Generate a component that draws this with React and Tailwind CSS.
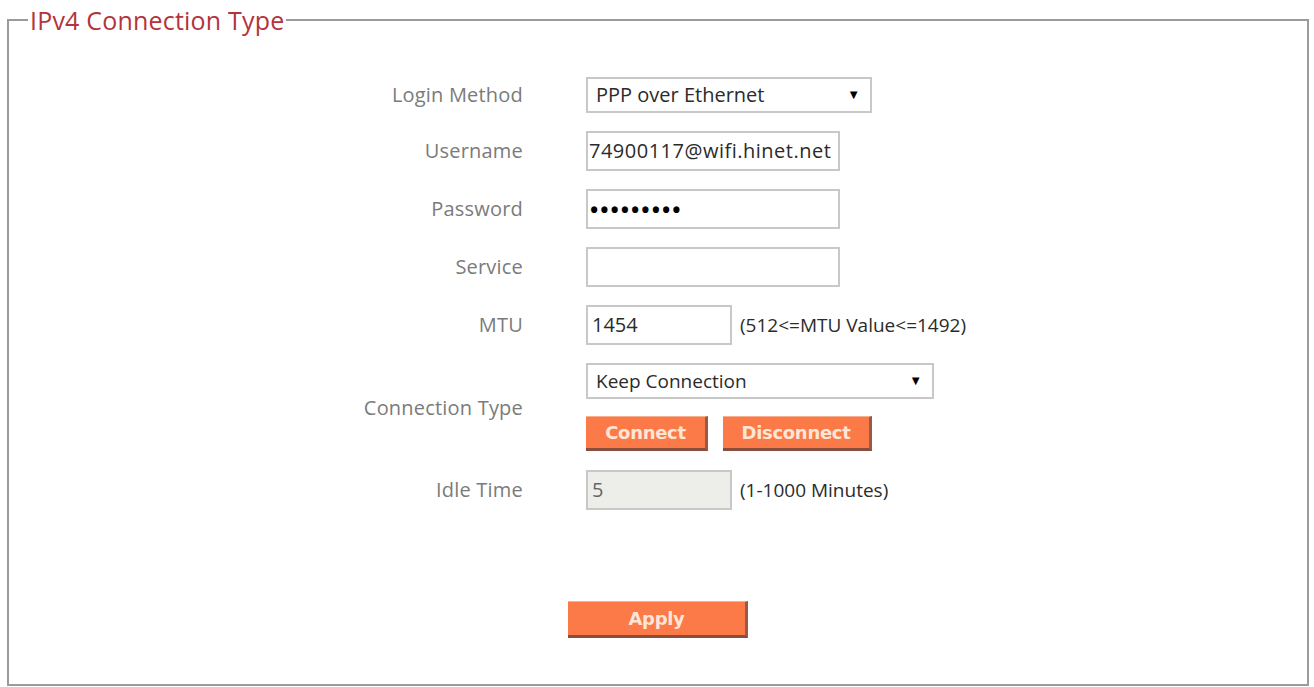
import React from "react";

const font = { fontFamily: '"Open Sans", "Noto Sans", Arial, sans-serif' };

function Label({ children }) {
  return (
    <div className="flex items-center justify-end text-[20px] text-[#7b7b7b] tracking-[0.2px]">
      {children}
    </div>
  );
}

function Box({ w, children, bg = "bg-white", h = "h-[40px]" }) {
  return (
    <div
      className={`${w} ${h} ${bg} border-2 border-[#c8c8c8] flex items-center pl-[1px] text-[20px] text-[#2b2b2b] overflow-hidden whitespace-nowrap`}
    >
      {children}
    </div>
  );
}

function Select({ w, children, size = "text-[20px]" }) {
  return (
    <div
      className={`${w} h-[36px] bg-white border-2 border-[#c8c8c8] flex items-center justify-between pl-[8px] pr-[10px] ${size} text-[#2b2b2b]`}
    >
      <span>{children}</span>
      <span className="text-[13px] text-black">▼</span>
    </div>
  );
}

function Btn({ w, h = "h-[35px]", children }) {
  return (
    <div
      className={`${w} ${h} bg-[#fb7a47] border-t border-t-[#f6b08f] border-b-[3px] border-b-[#8a4d3c] border-r-[3px] border-r-[#9a5a46] flex items-center justify-center text-[18px] font-bold text-[#fde6d8] tracking-[-0.3px]`}
      style={{ fontFamily: '"DejaVu Sans", Verdana, sans-serif' }}
    >
      {children}
    </div>
  );
}

export default function App() {
  return (
    <div className="w-[1314px] h-[687px] bg-white pt-[5px] pl-[7px] pr-[5px]" style={font}>
      <fieldset className="h-[681px] border-2 border-[#9b9b9b]">
        <legend className="ml-[19px] px-[2px] text-[25px] leading-[30px] text-[#b5333a] tracking-[0.2px]">
          IPv4 Connection Type
        </legend>
        <div className="pt-[42px]">
          <div className="grid grid-cols-[514px_auto] gap-x-[63px] gap-y-[18px] items-start">
            <Label><span className="leading-[36px]">Login Method</span></Label>
            <Select w="w-[286px]">PPP over Ethernet</Select>

            <Label><span className="leading-[40px]">Username</span></Label>
            <Box w="w-[254px]">
              <span className="text-[20px] tracking-[0.5px]">74900117@wifi.hinet.net</span>
            </Box>

            <Label><span className="leading-[40px]">Password</span></Label>
            <Box w="w-[254px]">
              <span className="text-[22px] font-bold text-black tracking-[2px] pl-[1px]">•••••••••</span>
            </Box>

            <Label><span className="leading-[40px]">Service</span></Label>
            <Box w="w-[254px]" />

            <Label><span className="leading-[40px]">MTU</span></Label>
            <div className="flex items-center gap-[8px]">
              <Box w="w-[146px]"><span className="pl-[3px]">1454</span></Box>
              <span className="text-[19px] text-[#2b2b2b]">(512&lt;=MTU Value&lt;=1492)</span>
            </div>

            <Label><span className="leading-[89px]">Connection Type</span></Label>
            <div className="flex flex-col gap-[17px]">
              <Select w="w-[348px]" size="text-[19px]">Keep Connection</Select>
              <div className="flex gap-[15px]">
                <Btn w="w-[122px]">Connect</Btn>
                <Btn w="w-[149px]">Disconnect</Btn>
              </div>
            </div>

            <Label><span className="leading-[40px]">Idle Time</span></Label>
            <div className="flex items-center gap-[8px]">
              <Box w="w-[146px]" bg="bg-[#ededea]"><span className="pl-[3px] text-[#666]">5</span></Box>
              <span className="text-[19px] text-[#2b2b2b]">(1-1000 Minutes)</span>
            </div>
          </div>
          <div className="flex justify-center pt-[91px]">
            <Btn w="w-[180px]" h="h-[37px]">Apply</Btn>
          </div>
        </div>
      </fieldset>
    </div>
  );
}
